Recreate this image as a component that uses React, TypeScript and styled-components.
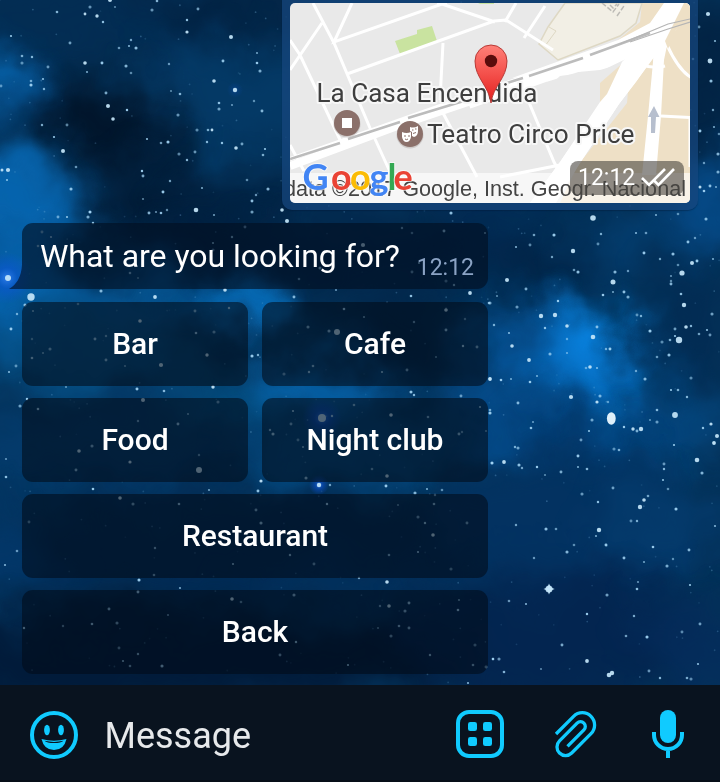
import React from "react";
import styled, { createGlobalStyle } from "styled-components";

const GlobalStyle = createGlobalStyle`
  *, *::before, *::after { box-sizing: border-box; }
  body { margin: 0; background: #03264b; }
`;

const Screen = styled.main`
  position: relative;
  isolation: isolate;
  display: flex;
  flex-direction: column;
  width: 720px;
  height: 782px;
  overflow: hidden;
  background: #043058;
  font-family: Roboto, "Liberation Sans", sans-serif;
`;

const Wallpaper = styled.svg`
  position: absolute;
  inset: 0;
  z-index: -1;
`;

const Chat = styled.section`
  flex: 1;
  display: flex;
  flex-direction: column;
  align-items: flex-start;
  padding: 0 22px;
`;

const LocationBubble = styled.article`
  position: relative;
  align-self: flex-end;
  width: 416px;
  height: 210px;
  padding: 3px 8px 7px;
  border-radius: 0 0 10px 10px;
  background: rgba(22, 70, 126, 0.72);
  box-shadow: 0 1px 1px rgba(0, 20, 50, 0.35);
`;

const MapView = styled.svg`
  display: block;
  border-radius: 5px;
`;

const MapStamp = styled.div`
  position: absolute;
  right: 14px;
  bottom: 15px;
  display: flex;
  align-items: center;
  width: 114px;
  height: 34px;
  padding-left: 8px;
  border-radius: 8px;
  background: rgba(72, 68, 64, 0.6);
  color: #fff;
  font-size: 23px;
  line-height: 32px;
`;

const Ticks = styled.svg`
  margin-left: 6px;
`;

const Question = styled.article`
  position: relative;
  display: flex;
  align-items: flex-end;
  width: 466px;
  height: 66px;
  margin-top: 13px;
  padding: 0 14px 0 18px;
  border-radius: 11px 11px 11px 0;
  background: rgba(1, 14, 32, 0.62);
  color: #fff;
`;

const Tail = styled.svg`
  position: absolute;
  left: -13px;
  bottom: 0;
`;

const QuestionText = styled.p`
  flex: 1;
  margin: 0 0 14px;
  font-size: 32px;
  line-height: 38px;
  letter-spacing: -0.03px;
  white-space: nowrap;
`;

const Stamp = styled.time`
  margin-bottom: 7px;
  color: #8ba3c4;
  font-size: 23px;
  line-height: 28px;
`;

const Keyboard = styled.div`
  display: grid;
  grid-template-columns: 226px 226px;
  grid-auto-rows: 84px;
  gap: 12px 14px;
  margin-top: 13px;
`;

const Key = styled.button<{ $wide?: boolean }>`
  grid-column: ${(p) => (p.$wide ? "1 / -1" : "auto")};
  padding: 0;
  border: 0;
  border-radius: 11px;
  background: rgba(1, 11, 22, 0.57);
  color: #fff;
  font: 500 30px/84px Roboto, "Liberation Sans", sans-serif;
`;

const Composer = styled.footer`
  display: flex;
  align-items: center;
  height: 97px;
  padding: 3px 36px 0 30px;
  background: #09131f;
  border-bottom: 2px solid #060e18;
  color: #10cbff;
`;

const Placeholder = styled.span`
  flex: 1;
  margin-left: 26.5px;
  padding-top: 3px;
  color: #e7e9eb;
  font-size: 36px;
  line-height: 44px;
`;

const Actions = styled.div`
  display: flex;
  align-items: center;
  gap: 50px;
`;

type Cloud = [number, number, number, number, string, number, number?];

// cx, cy, rx, ry, colour, opacity, rotation
const clouds: Cloud[] = [
  [100, 20, 140, 50, "#032c52", 0.8],
  [230, 10, 90, 30, "#02203f", 0.8],
  [225, 100, 95, 60, "#053f6f", 0.6],
  [100, 118, 78, 38, "#01152b", 1, 12],
  [150, 195, 60, 45, "#011a34", 0.9],
  [230, 205, 70, 30, "#02203f", 0.8],
  [0, 78, 28, 26, "#0878cc", 0.9],
  [20, 100, 30, 30, "#065396", 0.5],
  [15, 205, 70, 44, "#0767b2", 0.95, 24],
  [0, 290, 60, 60, "#0668b6", 0.9],
  [130, 300, 150, 26, "#0664ac", 0.75],
  [90, 350, 110, 45, "#06568f", 0.8],
  [255, 302, 35, 22, "#0a83dc", 0.9],
  [220, 250, 80, 22, "#011b38", 0.9],
  [370, 250, 150, 40, "#022447", 0.8],
  [400, 330, 60, 50, "#02274b", 0.9],
  [320, 385, 70, 26, "#0870c0", 0.85],
  [230, 400, 80, 22, "#0664a0", 0.6],
  [500, 230, 60, 40, "#022b55", 0.7],
  [550, 262, 50, 24, "#011f40", 0.7],
  [640, 240, 60, 25, "#054882", 0.55],
  [535, 350, 60, 45, "#065ba6", 0.75],
  [592, 335, 32, 38, "#0a92f8", 0.95],
  [603, 380, 42, 46, "#087bd6", 0.8, -25],
  [565, 355, 42, 44, "#0878d0", 0.6],
  [500, 420, 70, 35, "#06549a", 0.75],
  [563, 432, 45, 20, "#032f60", 0.6],
  [680, 325, 38, 70, "#022b53", 0.8],
  [690, 425, 45, 28, "#06508f", 0.7],
  [620, 440, 50, 22, "#064f92", 0.7],
  [640, 475, 22, 20, "#032d5b", 0.5],
  [705, 80, 40, 80, "#02203f", 0.8],
  [710, 200, 40, 40, "#065093", 0.8],
  [90, 450, 150, 45, "#043d70", 0.8],
  [340, 450, 110, 45, "#044980", 0.9],
  [220, 550, 260, 50, "#022a54", 0.9],
  [0, 550, 60, 50, "#033b70", 0.7],
  [160, 660, 320, 50, "#011633", 0.8],
  [350, 590, 120, 20, "#033463", 0.6],
  [570, 530, 140, 80, "#033363", 0.85],
  [660, 520, 60, 50, "#053f72", 0.6],
  [560, 640, 160, 70, "#03244f", 0.85],
  [700, 650, 60, 50, "#052f60", 0.6],
];

// x, y, radius
const brightStars = [
  97, 16, 1.7, 85, 14, 1.4, 110, 0, 2, 187, 32, 1.6, 231, 37, 2, 85, 63, 1.8, 214, 81, 1.8, 235, 90, 2.2, 108, 106, 2,
  113, 119, 1.8, 236, 148, 1.8, 63, 151, 2, 8, 170, 2.1, 2, 170, 1.5, 196, 210, 2.3, 282, 210, 1.8, 287, 221, 2, 212, 130, 1.4,
  593, 218, 2.8, 573, 251, 2.2, 507, 280, 2, 682, 273, 2.6, 692, 263, 2, 613, 282, 2.5, 684, 305, 2.2, 541, 316, 2.2,
  555, 315, 2.2, 567, 326, 1.8, 593, 337, 2.3, 686, 327, 1.8, 679, 340, 3.2, 512, 346, 1.8, 529, 360, 1.9, 590, 367, 1.8,
  571, 397, 2.1, 597, 402, 1.6, 641, 429, 2.2, 633, 429, 1.7, 675, 415, 2.9, 717, 436, 2, 711, 424, 1.6, 504, 462, 1.9,
  697, 460, 2.3, 714, 443, 1.9, 644, 500, 1.8, 640, 507, 2.2, 599, 530, 2.2, 587, 661, 1.9, 609, 675, 2.3, 612, 673, 2.2,
  143, 400, 2, 79, 451, 1.8, 130, 462, 1.6, 199, 470, 3, 213, 387, 1.7, 391, 415, 1.8, 387, 476, 1.8, 319, 485, 2.2,
  261, 481, 1.6, 120, 498, 1.8, 433, 535, 1.8, 387, 582, 1.8, 232, 599, 1.8, 389, 606, 1.8, 8, 278, 3, 31, 297, 3.7,
  140, 321, 1.8, 155, 297, 1.9, 161, 365, 2.1, 225, 290, 1.8, 363, 245, 2.1, 337, 332, 3, 446, 310, 1.8, 470, 293, 1.9,
  490, 379, 1.9, 322, 418, 4, 708, 14, 2.1, 710, 61, 2.4, 700, 187, 1.5, 549, 589, 3.5, 207, 355, 1.7,
];

const faintStars = [
  115, 7, 157, 1, 152, 10, 187, 20, 198, 9, 11, 36, 22, 56, 22, 63, 32, 57, 48, 67, 43, 79, 31, 81, 31, 85, 44, 89, 1, 86,
  129, 46, 119, 48, 136, 48, 131, 40, 102, 63, 87, 72, 131, 73, 126, 66, 169, 64, 223, 61, 257, 53, 257, 63, 260, 71, 254, 101,
  262, 111, 232, 105, 219, 103, 219, 109, 127, 110, 106, 93, 171, 91, 180, 94, 178, 115, 222, 143, 242, 144, 265, 149, 263, 155,
  179, 154, 187, 160, 195, 152, 147, 139, 161, 143, 168, 142, 42, 125, 67, 125, 7, 180, 76, 167, 71, 189, 170, 181, 163, 192,
  202, 188, 247, 180, 268, 189, 256, 195, 252, 201, 214, 215, 90, 212, 88, 217, 167, 210, 149, 213, 156, 212, 161, 213, 252, 212,
  142, 171, 143, 176, 143, 199, 57, 12, 90, 7, 103, 22, 70, 43, 54, 137, 208, 130, 197, 130, 207, 142, 58, 217, 67, 217,
  534, 235, 554, 235, 601, 234, 598, 244, 636, 233, 646, 233, 673, 254, 660, 259, 697, 261, 713, 259, 678, 265, 615, 272,
  628, 271, 624, 292, 613, 292, 603, 295, 628, 297, 671, 281, 671, 284, 671, 276, 681, 294, 712, 314, 558, 301, 526, 289,
  497, 296, 489, 303, 517, 307, 545, 328, 675, 329, 675, 336, 670, 340, 662, 342, 691, 326, 710, 335, 707, 330, 699, 334,
  650, 331, 641, 316, 637, 315, 509, 333, 657, 357, 669, 355, 606, 349, 610, 349, 597, 368, 586, 368, 645, 379, 636, 371,
  490, 379, 511, 379, 501, 380, 600, 396, 608, 402, 518, 403, 533, 422, 531, 428, 592, 420, 624, 427, 637, 431, 650, 420,
  657, 410, 657, 422, 703, 428, 714, 443, 671, 390, 678, 390, 691, 378, 687, 397, 581, 440, 589, 431, 490, 410, 490, 413,
  515, 447, 530, 245, 516, 247, 574, 270, 578, 272, 552, 257, 644, 253, 656, 215, 678, 214, 706, 219, 695, 238, 688, 242,
  537, 376, 530, 382, 550, 354, 567, 339, 597, 327, 567, 353, 492, 463, 518, 448, 537, 467, 561, 472, 545, 475, 587, 469,
  582, 494, 598, 502, 613, 488, 674, 445, 619, 450, 614, 449, 664, 469, 664, 464, 663, 480, 648, 496, 676, 509, 637, 521,
  631, 521, 715, 526, 556, 529, 546, 529, 516, 525, 606, 545, 596, 536, 574, 545, 567, 552, 534, 558, 624, 558, 644, 562,
  653, 547, 667, 566, 673, 559, 689, 550, 638, 582, 637, 589, 607, 595, 587, 614, 562, 645, 541, 669, 504, 672, 499, 659,
  493, 659, 700, 624, 690, 585, 687, 678, 691, 679, 660, 678, 649, 671, 698, 664, 626, 636, 647, 637, 634, 616, 682, 632,
  526, 604, 509, 601, 519, 465, 522, 468, 578, 456, 578, 467, 668, 489, 702, 473, 138, 421, 178, 424, 188, 414, 38, 409,
  92, 446, 199, 455, 76, 470, 6, 459, 6, 477, 20, 406, 27, 399, 137, 389, 66, 387, 164, 391, 218, 402, 332, 416, 291, 424,
  293, 411, 354, 405, 411, 392, 414, 395, 461, 396, 480, 407, 428, 417, 273, 434, 270, 430, 298, 440, 303, 447, 372, 469,
  306, 478, 330, 485, 386, 486, 427, 489, 442, 490, 415, 493, 435, 495, 258, 491, 209, 490, 93, 489, 492, 463, 462, 432,
  459, 434, 486, 431, 179, 504, 133, 504, 327, 504, 256, 510, 398, 505, 434, 504, 418, 517, 425, 523, 467, 523, 418, 552,
  389, 555, 451, 569, 290, 555, 314, 564, 233, 564, 154, 575, 139, 580, 155, 548, 29, 522, 5, 565, 17, 551, 261, 523,
  359, 578, 138, 592, 180, 588, 241, 602, 294, 595, 380, 606, 409, 603, 459, 600, 458, 610, 405, 611, 63, 626, 109, 609,
  168, 615, 92, 624, 117, 623, 24, 628, 409, 628, 378, 628, 399, 626, 391, 636, 296, 642, 280, 655, 348, 665, 473, 665,
  475, 645, 430, 655, 486, 667, 123, 661, 130, 666, 162, 666, 138, 654, 119, 648, 468, 683, 493, 659, 25, 305, 17, 314,
  11, 329, 33, 311, 78, 304, 101, 291, 106, 336, 95, 339, 43, 353, 32, 358, 50, 349, 32, 339, 106, 360, 125, 366, 196, 333,
  214, 332, 229, 308, 195, 311, 138, 278, 130, 273, 90, 212, 93, 223, 42, 232, 51, 237, 38, 246, 213, 250, 232, 237, 245, 227,
  213, 243, 152, 262, 252, 356, 258, 355, 16, 366, 9, 372, 137, 389, 451, 213, 402, 228, 444, 231, 485, 233, 412, 233,
  329, 331, 414, 322, 446, 330, 364, 317, 344, 309, 308, 327, 465, 319, 294, 297, 336, 290, 411, 296, 490, 303, 463, 346,
  477, 347, 436, 357, 313, 366, 284, 374, 309, 372, 407, 370, 382, 372, 411, 392, 446, 281, 454, 285, 412, 272, 419, 263,
  299, 279, 320, 268, 494, 325, 699, 27, 715, 41, 693, 59, 711, 81, 713, 110, 700, 131, 714, 127, 719, 134, 718, 154,
  704, 163, 710, 186, 716, 187, 704, 191, 718, 172,
];

const brightDots = brightStars.filter((_, i) => i % 3 === 0).map((x, i) => ({
  x,
  y: brightStars[i * 3 + 1],
  r: brightStars[i * 3 + 2],
}));
const faintDots = faintStars.filter((_, i) => i % 2 === 0).map((x, i) => ({
  x,
  y: faintStars[i * 2 + 1],
  r: 1.1 + ((i * 7) % 5) * 0.12,
  o: 0.55 + ((i * 11) % 7) * 0.06,
}));
const dust = Array.from({ length: 420 }, (_, i) => ({
  x: (i * 277.31 + ((i * i) % 91) * 3.7) % 720,
  y: (i * 151.77 + ((i * i) % 67) * 5.3) % 684,
  o: 0.12 + (i % 5) * 0.05,
}));

const SpaceWallpaper = () => (
  <Wallpaper width="720" height="782" viewBox="0 0 720 782" aria-hidden="true">
    <defs>
      <filter id="nebula" x="-100%" y="-150%" width="300%" height="400%" colorInterpolationFilters="sRGB">
        <feGaussianBlur stdDeviation="18" />
      </filter>
      <filter id="wisps" filterUnits="userSpaceOnUse" x="-60" y="-60" width="840" height="900" colorInterpolationFilters="sRGB">
        <feTurbulence type="fractalNoise" baseFrequency="0.014" numOctaves="4" seed="4" result="noise" />
        <feDisplacementMap in="SourceGraphic" in2="noise" scale="70" xChannelSelector="R" yChannelSelector="G" />
      </filter>
      <filter id="soft" x="0" y="0" width="100%" height="100%">
        <feGaussianBlur stdDeviation="0.45" />
      </filter>
      <radialGradient id="halo">
        <stop offset="0" stopColor="#3b86ff" stopOpacity="0.75" />
        <stop offset="0.4" stopColor="#0c53d8" stopOpacity="0.5" />
        <stop offset="1" stopColor="#0c53d8" stopOpacity="0" />
      </radialGradient>
    </defs>
    <g filter="url(#wisps)">
      <rect x="-60" y="-60" width="840" height="900" fill="#043158" />
      {clouds.map(([cx, cy, rx, ry, fill, o, rot = 0], i) => (
        <ellipse
          key={i}
          cx={cx}
          cy={cy}
          rx={rx}
          ry={ry}
          fill={fill}
          opacity={o}
          filter="url(#nebula)"
          transform={`rotate(${rot} ${cx} ${cy})`}
        />
      ))}
    </g>
    <circle cx="7" cy="278" r="26" fill="url(#halo)" />
    <circle cx="322" cy="418" r="20" fill="url(#halo)" />
    <circle cx="319" cy="485" r="10" fill="url(#halo)" />
    <circle cx="235" cy="90" r="8" fill="url(#halo)" opacity="0.3" />
    <g filter="url(#soft)">
      {dust.map((d, i) => (
        <circle key={i} cx={d.x} cy={d.y} r="0.9" fill="#78b4e0" opacity={d.o} />
      ))}
      {faintDots.map((d, i) => (
        <circle key={i} cx={d.x} cy={d.y} r={d.r} fill="#a6d8f8" opacity={d.o} />
      ))}
      {brightDots.map((d, i) => (
        <circle key={i} cx={d.x} cy={d.y} r={d.r} fill="#c4e6fa" opacity="0.92" />
      ))}
      <ellipse cx="611.3" cy="418.5" rx="4.4" ry="6.2" fill="#dff0fa" />
      <path d="M543.500 589l4-1.500 1.500-4 1.700 4 4 1.500-4 1.500-1.700 4-1.500-4z" fill="#c4e6fa" />
    </g>
  </Wallpaper>
);

const GOOGLE: [string, number, string][] = [
  ["G", 302.500, "#4285f4"],
  ["o", 331, "#ea4335"],
  ["o", 350, "#fbbc05"],
  ["g", 369.500, "#4285f4"],
  ["l", 387.500, "#34a853"],
  ["e", 393.500, "#ea4335"],
];

const CityMap = () => (
  <MapView width="400" height="200" viewBox="290 3 400 200" role="img" aria-label="Map">
    <defs>
      <linearGradient id="pin" x1="0" y1="0" x2="0" y2="1">
        <stop offset="0" stopColor="#ff8078" />
        <stop offset="0.5" stopColor="#f4504b" />
        <stop offset="1" stopColor="#e31e1e" />
      </linearGradient>
    </defs>
    <rect x="290" y="3" width="400" height="200" fill="#e9e9e9" />
    <path d="M642 3H690V203H560L578 165L627 103L629 79L600 83L624 54L612 45L640 22Z" fill="#eee0c6" />
    <path d="M565 3H642L636 23L620 36L558 60L539 44L548 27Z" fill="#f2efe5" stroke="#ded8c4" strokeWidth="1.500" />
    <path d="M549 27l7 4-11 15" fill="none" stroke="#ded8c4" />
    <path d="M602 3l11 9 6-8M610 5l3 3 4-4M617 16l7-10" fill="none" stroke="#bcbab5" strokeWidth="1.500" strokeDasharray="5 2" />
    <path d="M395 41l22-7v-4l15-4 5 15-37 13z" fill="#c9e3a0" />
    <path d="M478 3h16v1h-14z" fill="#c9e3a0" />

    <g fill="none" stroke="#fff" strokeWidth="3">
      <path d="M313 3L334 43L370 128L396 185M352 3L334 42L442 4L495 22M447 4h-10M290 70L322 23M290 40L300 55L342 144M347 74L494 21L506 20L553 50" />
      <path d="M443 43L440 100M443 113L477 177M290 145L304 171M528 100L554 162L559 171M500 177L560 165M516 3L505 22M545 6L524 38" />
      <path d="M623 56q24 15 42 10M667 45q12 26 25 33M661 116l30 1.500M690 117v50" />
    </g>
    <path d="M290 166L400 125L480 98" fill="none" stroke="#fff" strokeWidth="8" />
    <path d="M468 102L545 75L590 61L660 40" fill="none" stroke="#fff" strokeWidth="14" />
    <path d="M290 159L460 99" fill="none" stroke="#fff" strokeWidth="4" />
    <path d="M512 78L618 40L650 23L664 3H690V14L667 40L640 76L619 104L580 163L556 203H530L560 162L603 100L612 88L632 61L600 70Z" fill="#fff" />
    <path d="M560 76L603 70L628 58L608 90L590 120L545 90Z" fill="#e9e9e9" />
    <path d="M600 83L624 62L612 90L600 110Z" fill="#eee0c6" />
    <path d="M622 62L652 30L660 48L636 82L619 104L580 163L562 190L545 203H530L560 162L600 102L607 94Z" fill="#fff" />
    <path d="M654 38L671 26L664 60L661 116L656 175H642L648 116L653 62Z" fill="#fff" />
    <path d="M684 3h6v17l-14 10-8 19-3-8z" fill="#eee0c6" />
    <path d="M290 159L340 143M348 139L400 122M408 118L467 100M507 83L523 78M529 76L583 58M590 55L650 33" fill="none" stroke="#bcbcbc" strokeWidth="2.600" />
    <path d="M620 44L668 24L690 19M630 42L668 29L690 22" fill="none" stroke="#b5b5b5" strokeWidth="1.200" />
    <path d="M651 133V117H648L654 106L659.500 117H656L655 133Z" fill="#b7bfce" />

    <g fill="#8b706a">
      <circle cx="347" cy="124" r="13.500" fill="#bbb4b2" opacity="0.6" />
      <circle cx="410" cy="135" r="13.500" fill="#bbb4b2" opacity="0.6" />
      <circle cx="347" cy="123" r="13" />
      <circle cx="410" cy="134" r="13" />
    </g>
    <rect x="342" y="118" width="10" height="10" fill="#fff" />
    <path d="M410 127q4 1.500 8-1v5q0 5-4 6l-2-1v-4l-2-1z" fill="#fff" />
    <path d="M402 132q4.500 2 9 0v5q-1 5-4.500 5t-4.500-5z" fill="#fff" />
    <path d="M404 136h2m2 0h2M405 139q1.500 1.300 3 0M412 130h1.500m1.500-1h1.500M413 133.500l3-1" fill="none" stroke="#8b706a" />

    <g fontFamily="Roboto, sans-serif" fontSize="26" fill="#3e3e3e" stroke="#f7f7f7" strokeWidth="4" strokeLinejoin="round" paintOrder="stroke">
      <text x="316.500" y="102" textLength="221" lengthAdjust="spacingAndGlyphs">La Casa Encendida</text>
      <text x="427" y="143" textLength="207.500" lengthAdjust="spacingAndGlyphs">Teatro Circo Price</text>
    </g>
    <path d="M491 103C489 86 475 78 475 61A16 16 0 0 1 507 61C507 78 493 86 491 103Z" fill="url(#pin)" stroke="#b83a36" />
    <circle cx="491" cy="61" r="6.200" fill="#5a0c0c" />

    <rect x="290" y="173" width="400" height="30" fill="#fff" opacity="0.62" />
    <text x="686" y="195.500" textAnchor="end" fontFamily="Liberation Sans, Arial, sans-serif" fontSize="21.500" textLength="402" lengthAdjust="spacingAndGlyphs" fill="#444">
      data ©2017 Google, Inst. Geogr. Nacional
    </text>
    <g fontFamily="Lato, sans-serif" fontWeight="700" fontSize="36" stroke="#fff" strokeOpacity="0.6" strokeWidth="2" paintOrder="stroke">
      {GOOGLE.map(([letter, x, fill]) => (
        <text key={x} x={x} y="190" fill={fill}>
          {letter}
        </text>
      ))}
    </g>
  </MapView>
);

const Smile = styled.svg`
  margin-top: 2px;
`;

const SmileIcon = () => (
  <Smile width="48" height="48" viewBox="0 0 48 48" fill="currentColor">
    <circle cx="24" cy="24" r="22" fill="none" stroke="currentColor" strokeWidth="4" />
    <ellipse cx="17" cy="19" rx="2.900" ry="5.200" />
    <ellipse cx="31" cy="19" rx="2.900" ry="5.200" />
    <path d="M11.500 28q12.500 3.500 25 0Q34 39 24 39T11.500 28z" />
    <path d="M14.500 29.800q9.500 2.200 19 0-2.500 2.300-9.500 2.300t-9.500-2.300z" fill="#09131f" />
  </Smile>
);

const GridIcon = () => (
  <svg width="48" height="48" viewBox="0 0 48 48" fill="currentColor">
    <rect x="2" y="2" width="44" height="44" rx="11" fill="none" stroke="currentColor" strokeWidth="4" />
    <rect x="12" y="12" width="9" height="9" rx="2.300" />
    <rect x="27" y="12" width="9" height="9" rx="2.300" />
    <rect x="12" y="27" width="9" height="9" rx="2.300" />
    <rect x="27" y="27" width="9" height="9" rx="2.300" />
  </svg>
);

const ClipIcon = () => (
  <svg width="48" height="48" viewBox="3 0 48 48" fill="none" stroke="currentColor" strokeWidth="3.300">
    <path d="M5 24L22.600 6.300A12.300 12.300 0 0 1 40 23.700L20.700 43A8.600 8.600 0 0 1 8.500 30.800L26.100 13.100A4.800 4.800 0 0 1 32.900 19.900L16.500 36.300" />
  </svg>
);

const MicIcon = () => (
  <svg width="32" height="48" viewBox="0 0 32 48" fill="currentColor">
    <rect x="8" y="0" width="16" height="33" rx="8" />
    <path d="M2 22v3a14 14 0 0 0 28 0v-3M16 39v9" fill="none" stroke="currentColor" strokeWidth="4" />
  </svg>
);

const keys = [
  { label: "Bar" },
  { label: "Cafe" },
  { label: "Food" },
  { label: "Night club" },
  { label: "Restaurant", wide: true },
  { label: "Back", wide: true },
];

export default function App() {
  return (
    <>
      <GlobalStyle />
      <Screen>
        <SpaceWallpaper />
        <Chat>
          <LocationBubble>
            <CityMap />
            <MapStamp>
              12:12
              <Ticks width="34" height="20" viewBox="0 0 34 20" fill="none" stroke="#fff" strokeWidth="2.600">
                <path d="M1 10l7 7L24 1M13 12.500l4.500 4.500L33 1" />
              </Ticks>
            </MapStamp>
          </LocationBubble>
          <Question>
            <Tail width="13" height="24" viewBox="0 0 13 24">
              <path d="M13 0v24H0Q12 17 13 0z" fill="rgba(1,14,32,.62)" />
            </Tail>
            <QuestionText>What are you looking for?</QuestionText>
            <Stamp>12:12</Stamp>
          </Question>
          <Keyboard>
            {keys.map((k) => (
              <Key key={k.label} $wide={k.wide}>
                {k.label}
              </Key>
            ))}
          </Keyboard>
        </Chat>
        <Composer>
          <SmileIcon />
          <Placeholder>Message</Placeholder>
          <Actions>
            <GridIcon />
            <ClipIcon />
            <MicIcon />
          </Actions>
        </Composer>
      </Screen>
    </>
  );
}
